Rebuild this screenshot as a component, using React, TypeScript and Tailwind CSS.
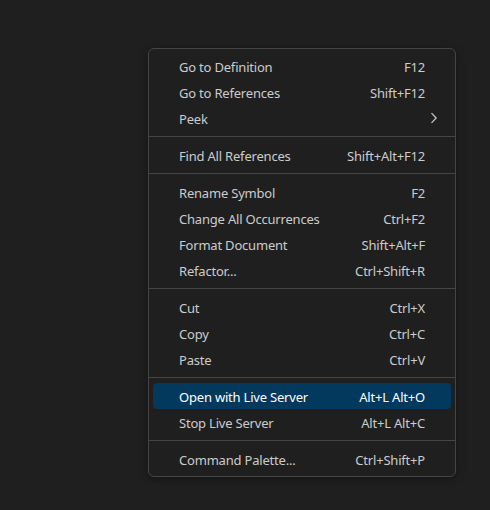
import React from "react";

type Item = { label: string; shortcut?: string; submenu?: boolean; active?: boolean };

const groups: Item[][] = [
  [
    { label: "Go to Definition", shortcut: "F12" },
    { label: "Go to References", shortcut: "Shift+F12" },
    { label: "Peek", submenu: true },
  ],
  [{ label: "Find All References", shortcut: "Shift+Alt+F12" }],
  [
    { label: "Rename Symbol", shortcut: "F2" },
    { label: "Change All Occurrences", shortcut: "Ctrl+F2" },
    { label: "Format Document", shortcut: "Shift+Alt+F" },
    { label: "Refactor...", shortcut: "Ctrl+Shift+R" },
  ],
  [
    { label: "Cut", shortcut: "Ctrl+X" },
    { label: "Copy", shortcut: "Ctrl+C" },
    { label: "Paste", shortcut: "Ctrl+V" },
  ],
  [
    { label: "Open with Live Server", shortcut: "Alt+L Alt+O", active: true },
    { label: "Stop Live Server", shortcut: "Alt+L Alt+C" },
  ],
  [{ label: "Command Palette...", shortcut: "Ctrl+Shift+P" }],
];

function Row({ item }: { item: Item }) {
  return (
    <div
      className={
        "mx-1 flex h-[26px] items-center rounded-[4px] pl-[26px] pr-[26px] pt-[4px] " +
        (item.active ? "bg-[#04395e] text-white" : "text-[#cccccc]")
      }
    >
      <span className="flex-1 whitespace-nowrap">{item.label}</span>
      {item.shortcut && <span className="whitespace-nowrap">{item.shortcut}</span>}
      {item.submenu && (
        <svg width="8" height="12" viewBox="0 0 8 12" className="-mr-[13px] -mt-[4px]" fill="none">
          <polyline points="1.5,1.2 6.2,6 1.5,10.8" stroke="#cccccc" strokeWidth="1.2" />
        </svg>
      )}
    </div>
  );
}

export default function App() {
  return (
    <div
      className="h-[510px] w-[490px] bg-[#1f1f1f] pl-[148px] pt-[48px]"
      style={{ fontFamily: '"Noto Sans", "Open Sans", sans-serif' }}
    >
      <div className="w-[308px] rounded-[6px] border border-[#454545] bg-[#1f1f1f] py-1 text-[13px] tracking-[-0.2px] shadow-[0_2px_8px_rgba(0,0,0,0.36)]">
        {groups.map((g, gi) => (
          <div key={gi}>
            {gi > 0 && <div className="my-[5px] h-px bg-[#454545]" />}
            {g.map((it) => (
              <Row key={it.label} item={it} />
            ))}
          </div>
        ))}
      </div>
    </div>
  );
}
